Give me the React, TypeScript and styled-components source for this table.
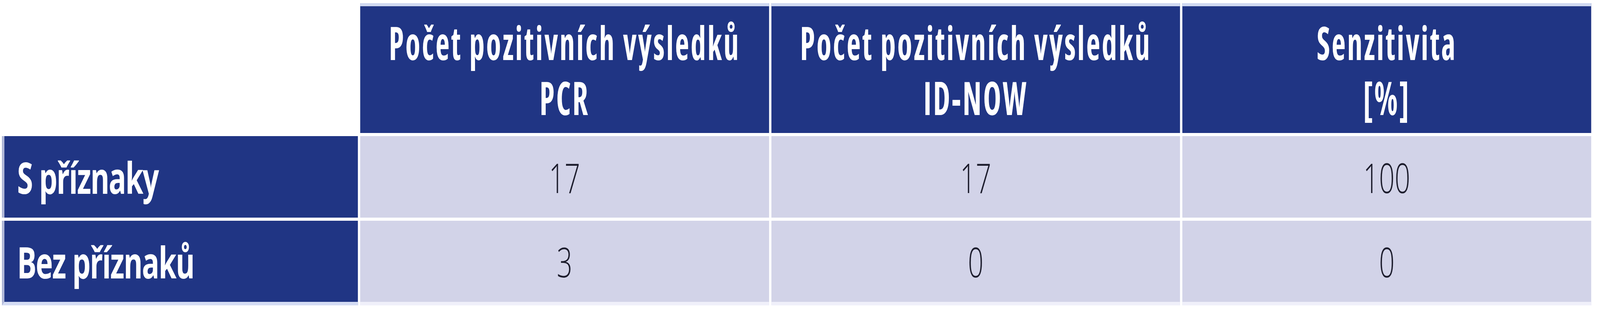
import React, { useLayoutEffect, useState } from "react";
import styled, { createGlobalStyle } from "styled-components";

const GlobalStyle = createGlobalStyle`
  html, body {
    margin: 0;
    padding: 0;
    background: #ffffff;
    overflow: hidden;
  }
`;

const DESIGN_WIDTH = 6183;
const NAVY = "#203584";
const LAVENDER = "#d2d3e8";
const FONT = `"Open Sans", "Noto Sans", "Liberation Sans", sans-serif`;

type Row = {
  label: string;
  values: string[];
};

const headers: [string, string][] = [
  ["Počet pozitivních výsledků", "PCR"],
  ["Počet pozitivních výsledků", "ID-NOW"],
  ["Senzitivita", "[%]"],
];

const rows: Row[] = [
  { label: "S příznaky", values: ["17", "17", "100"] },
  { label: "Bez příznaků", values: ["3", "0", "0"] },
];

// the table is drawn for a 6183px wide page; squeeze it sideways if the window is narrower
const useFit = () => {
  const [k, setK] = useState(() => Math.min(1, window.innerWidth / DESIGN_WIDTH));
  useLayoutEffect(() => {
    const onResize = () => setK(Math.min(1, window.innerWidth / DESIGN_WIDTH));
    window.addEventListener("resize", onResize);
    return () => window.removeEventListener("resize", onResize);
  }, []);
  return k;
};

export default function App() {
  const k = useFit();
  return (
    <>
      <GlobalStyle />
      <Viewport>
        <Page style={{ transform: `scaleX(${k})` }}>
          <Table>
            <Corner />
            {headers.map(([top, bottom], i) => (
              <HeadCell key={i}>
                {top}
                <br />
                {bottom}
              </HeadCell>
            ))}
            {rows.map((row, r) => (
              <React.Fragment key={row.label}>
                <LabelCell $last={r === rows.length - 1}>{row.label}</LabelCell>
                {row.values.map((v, i) => (
                  <ValueCell key={i} $last={r === rows.length - 1}>
                    {v}
                  </ValueCell>
                ))}
              </React.Fragment>
            ))}
          </Table>
        </Page>
      </Viewport>
    </>
  );
}

const Viewport = styled.div`
  width: 100vw;
  height: 800px;
  overflow: hidden;
`;

const Page = styled.div`
  width: ${DESIGN_WIDTH}px;
  height: 800px;
  padding: 8px 0 0 8px;
  box-sizing: border-box;
  background: #ffffff;
  transform-origin: 0 0;
`;

const Table = styled.div`
  width: 6141px;
  display: grid;
  grid-template-columns: 1375px repeat(3, minmax(0, 1fr));
  grid-template-rows: 333px 209px auto;
  column-gap: 9px;
  row-gap: 8px;
`;

const Corner = styled.div`
  background: #ffffff;
`;

const HeadCell = styled.div`
  border-top: 8px solid #d0d9f1;
  background: ${NAVY};
  color: #ffffff;
  font-family: ${FONT};
  font-weight: 700;
  font-stretch: 75%;
  font-size: 118px;
  letter-spacing: 6px;
  line-height: 141px;
  display: flex;
  align-items: center;
  justify-content: center;
  text-align: center;
  white-space: nowrap;
  overflow: hidden;
`;

const LabelCell = styled.div<{ $last: boolean }>`
  height: ${({ $last }) => ($last ? "208px" : "209px")};
  border-left: 9px solid #b3bad9;
  border-bottom: ${({ $last }) => ($last ? "9px solid #d4dcf4" : "none")};
  background: ${NAVY};
  color: #ffffff;
  font-family: ${FONT};
  font-weight: 700;
  font-size: 112px;
  letter-spacing: -3px;
  padding-left: 49px;
  display: flex;
  align-items: center;
  white-space: nowrap;
`;

const ValueCell = styled.div<{ $last: boolean }>`
  height: ${({ $last }) => ($last ? "208px" : "209px")};
  border-bottom: ${({ $last }) => ($last ? "9px solid #f0f0fa" : "none")};
  background: ${LAVENDER};
  color: #1c1c2c;
  font-family: ${FONT};
  font-weight: 300;
  font-size: 106px;
  display: flex;
  align-items: center;
  justify-content: center;
`;
